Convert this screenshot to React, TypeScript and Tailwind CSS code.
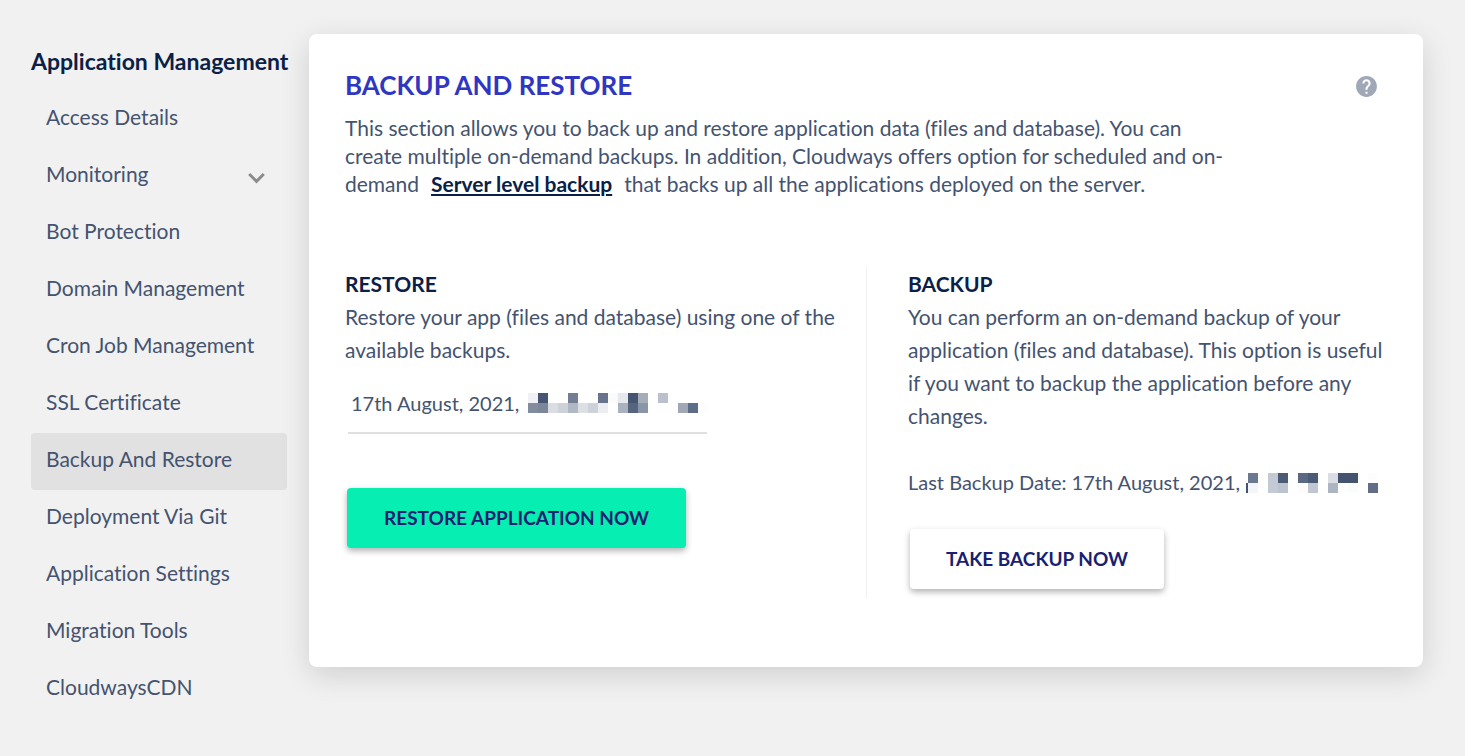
import React, { useState } from 'react';

const menuItems = [
  'Access Details',
  'Monitoring',
  'Bot Protection',
  'Domain Management',
  'Cron Job Management',
  'SSL Certificate',
  'Backup And Restore',
  'Deployment Via Git',
  'Application Settings',
  'Migration Tools',
  'CloudwaysCDN'
];

// [column, row, colour]
type Cell = [number, number, string];

const restoreCells: Cell[] = [
  [0, 0, '#f0f1f5'], [1, 0, '#465571'], [4, 0, '#737e94'], [7, 0, '#68748d'], [8, 0, '#fafbfb'],
  [9, 0, '#e5e9ee'], [10, 0, '#45546f'], [11, 0, '#a5acba'], [13, 0, '#bbc0cc'],
  [0, 1, '#838c9f'], [1, 1, '#7b8698'], [2, 1, '#dadee2'], [3, 1, '#ccd2d8'], [4, 1, '#b0b7c5'],
  [5, 1, '#dce0e5'], [6, 1, '#ccd2d8'], [7, 1, '#ecedf2'], [9, 1, '#abb2bf'], [10, 1, '#56657f'],
  [11, 1, '#8a96a7'], [15, 1, '#a0a8b8'], [16, 1, '#5d6c87'], [17, 1, '#fdfdfd']
];
const backupCells: Cell[] = [
  [0, 0, '#6c7890'], [2, 0, '#c4cad3'], [3, 0, '#4b5b76'], [5, 0, '#5a6881'], [6, 0, '#4b5b76'],
  [8, 0, '#dadde3'], [9, 0, '#44536e'], [10, 0, '#44536e'], [12, 0, '#fdfdfd'],
  [0, 1, '#f4f5f9'], [2, 1, '#c4cad3'], [3, 1, '#bdc3ce'], [5, 1, '#fcfcfc'], [6, 1, '#c1c7d1'],
  [8, 1, '#aeb5c2'], [9, 1, '#fdfdfd'], [10, 1, '#fafcfb'], [12, 1, '#626e88']
];

const Mosaic = ({ cells, columns }: { cells: Cell[]; columns: number }) => {
  return <svg width={columns * 10} height="20" viewBox={`0 0 ${columns * 10} 20`} shapeRendering="crispEdges" className="shrink-0" aria-hidden="true">
      {cells.map(([x, y, fill]) => <rect key={`${x}-${y}`} x={x * 10} y={y * 10} width="10" height="10" fill={fill} />)}
    </svg>;
};

const Sidebar = () => {
  const [active, setActive] = useState('Backup And Restore');
  return <aside className="w-64 shrink-0">
      <h2 className="h-[57px] pt-3 text-[23px] leading-[30px] font-bold text-[#0a2046] whitespace-nowrap">
        Application Management
      </h2>
      <nav>
        {menuItems.map(item => <a key={item} href="#" onClick={() => setActive(item)} className={`flex items-center justify-between h-[57px] pl-[15px] pr-[22px] pb-1.5 rounded ${item === active ? 'bg-[#e1e1e1]' : ''}`}>
            {item}
            {item === 'Monitoring' && <svg width="17" height="12" viewBox="0 0 17 12" fill="none" stroke="#8c8c8c" strokeWidth="3" className="mt-2" aria-hidden="true">
                <path d="M1.2 2L8.5 9.3L15.8 2" />
              </svg>}
          </a>)}
      </nav>
    </aside>;
};

const App = () => {
  return <div className="min-h-screen flex items-start gap-[22px] pl-[31px] pr-[42px] py-[34px] bg-[#f1f1f1] font-['Lato',sans-serif] [font-variant-ligatures:none] text-[21px] text-[#44536f]">
      <Sidebar />
      <main className="flex-1 min-w-0 px-9 pt-9 pb-[69px] rounded-lg bg-white shadow-[0_8px_30px_rgba(0,0,0,0.14)]">
        {/* Header */}
        <div className="flex items-start justify-between">
          <h1 className="text-[26px] leading-[30px] font-bold text-[#2f36c1]">BACKUP AND RESTORE</h1>
          <button type="button" aria-label="Help" className="mt-1 mr-2">
            <svg width="25" height="25" viewBox="0 0 24 24" fill="#a0a8b7" aria-hidden="true">
              <path d="M12 2C6.48 2 2 6.48 2 12s4.48 10 10 10 10-4.48 10-10S17.52 2 12 2zm1 17h-2v-2h2v2zm2.07-7.75l-.9.92C13.45 12.9 13 13.5 13 15h-2v-.5c0-1.1.45-2.1 1.17-2.83l1.24-1.26c.37-.36.59-.86.59-1.41 0-1.1-.9-2-2-2s-2 .9-2 2H8c0-2.21 1.79-4 4-4s4 1.79 4 4c0 .88-.36 1.68-.93 2.25z" />
            </svg>
          </button>
        </div>
        <p className="mt-3.5 max-w-[890px] leading-7">
          This section allows you to back up and restore application data (files and database). You can
          create multiple on-demand backups. In addition, Cloudways offers option for scheduled and on-demand
          <a href="#" className="mx-3 font-bold text-[#0a2046] underline decoration-2 underline-offset-2">Server level backup</a>
          that backs up all the applications deployed on the server.
        </p>

        <div className="mt-[69px] grid grid-cols-[522fr_524fr] min-h-[331px] -mr-1 leading-[33px]">
          {/* Restore */}
          <section className="pr-6 border-r border-[#f0f0f0]">
            <h3 className="font-bold text-[#0a2046]">RESTORE</h3>
            <p>Restore your app (files and database) using one of the available backups.</p>
            <div className="mt-3 ml-[3px] w-[359px] h-14 pb-1 flex items-center border-b-2 border-[#e0e0e0]">
              <select aria-label="Restore point" className="w-[180px] shrink-0 pl-[3px] appearance-none bg-transparent text-xl">
                <option>17th August, 2021,</option>
              </select>
              <Mosaic cells={restoreCells} columns={18} />
            </div>
            <button type="button" className="mt-[54px] ml-0.5 w-[339px] h-[60px] pb-0.5 rounded bg-[#07eeb2] text-[19px] font-bold text-[#1a1f71] shadow-[0_3px_6px_rgba(0,0,0,0.3)]">
              RESTORE APPLICATION NOW
            </button>
          </section>
          {/* Backup */}
          <section className="pl-[41px]">
            <h3 className="font-bold text-[#0a2046]">BACKUP</h3>
            <p className="mr-1">
              You can perform an on-demand backup of your application (files and database). This option is useful if you want to backup the application before any changes.
            </p>
            <div className="mt-[34px] flex items-center text-xl leading-[33px] whitespace-nowrap">
              <span className="w-[338px]">Last Backup Date: 17th August, 2021,</span>
              <span className="self-end mb-1.5 w-0.5 h-2.5 bg-[#44536f]" />
              <Mosaic cells={backupCells} columns={13} />
            </div>
            <button type="button" className="mt-[30px] ml-0.5 w-[254px] h-[60px] pb-0.5 rounded bg-white text-[19px] font-bold text-[#1a1f71] shadow-[0_3px_6px_rgba(0,0,0,0.3)]">
              TAKE BACKUP NOW
            </button>
          </section>
        </div>
      </main>
    </div>;
};
export default App;
